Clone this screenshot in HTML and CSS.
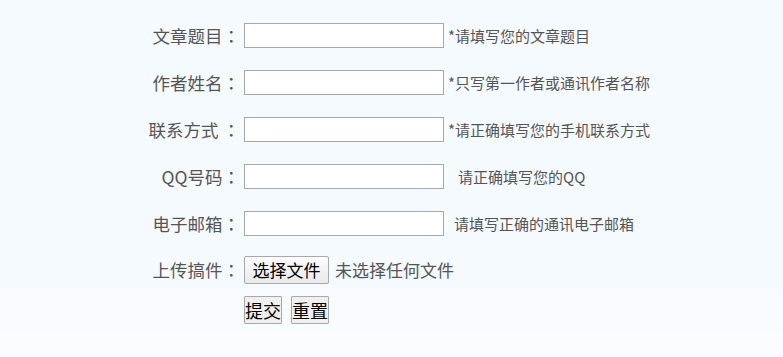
FILE: index.html
```html
<!DOCTYPE html>
<html lang="zh-CN">
<head>
<meta charset="utf-8">
<title>投稿</title>
<link rel="stylesheet" href="styles.css">
</head>
<body>
<form class="form">
  <div class="row">
    <label class="label">文章题目<span class="colon" lang="zh-TW">：</span></label>
    <input class="field" type="text">
    <span class="hint">*请填写您的文章题目</span>
  </div>
  <div class="row">
    <label class="label">作者姓名<span class="colon" lang="zh-TW">：</span></label>
    <input class="field" type="text">
    <span class="hint">*只写第一作者或通讯作者名称</span>
  </div>
  <div class="row">
    <label class="label">联系方式 <span class="colon" lang="zh-TW">：</span></label>
    <input class="field" type="text">
    <span class="hint">*请正确填写您的手机联系方式</span>
  </div>
  <div class="row">
    <label class="label">QQ号码<span class="colon" lang="zh-TW">：</span></label>
    <input class="field" type="text">
    <span class="hint hint-qq">请正确填写您的QQ</span>
  </div>
  <div class="row">
    <label class="label">电子邮箱<span class="colon" lang="zh-TW">：</span></label>
    <input class="field" type="text">
    <span class="hint hint-mail">请填写正确的通讯电子邮箱</span>
  </div>
  <div class="row row-file">
    <label class="label">上传搞件<span class="colon" lang="zh-TW">：</span></label>
    <span class="file-btn">选择文件</span>
    <span class="file-name">未选择任何文件</span>
  </div>
  <div class="row row-actions">
    <span class="label"></span>
    <button class="btn" type="button">提交</button>
    <button class="btn" type="button">重置</button>
  </div>
</form>
</body>
</html>
```

FILE: styles.css
```css
html, body {
  margin: 0;
  padding: 0;
}
body {
  min-height: 357px;
  font-family: "Noto Sans CJK SC", "Noto Sans", sans-serif;
  color: #555;
  background: linear-gradient(to bottom,
    #f5faff 0, #f5faff 289px,
    #f8fbff 289px, #f8fbff 332px,
    #fafcff 332px, #fafcff 100%);
}
.form {
  display: flex;
  flex-direction: column;
  padding-top: 12px;
}
.row {
  display: flex;
  align-items: center;
  height: 47px;
}
.label {
  width: 240px;
  flex: none;
  text-align: right;
  font-size: 17.5px;
  line-height: 24px;
  color: #555;
  margin-right: 4px;
  white-space: pre;
}
.colon {
  font-family: "Noto Sans CJK TC", "Noto Sans CJK SC", sans-serif;
}
.field {
  width: 200px;
  height: 25px;
  box-sizing: border-box;
  margin: 0;
  border: 1px solid #a9a9a9;
  background: #fff;
  padding: 0 2px;
}
.hint {
  font-size: 15px;
  line-height: 20px;
  color: #555;
  margin-left: 4px;
}
.hint-qq {
  margin-left: 14px;
}
.hint-mail {
  margin-left: 10px;
}
.row-file {
  height: 46px;
}
.file-btn {
  box-sizing: border-box;
  width: 85px;
  height: 28px;
  border: 1px solid #a9a9a9;
  border-radius: 2px;
  background: linear-gradient(to bottom, #fdfdfd, #e9e9e9);
  color: #000;
  font-size: 17px;
  line-height: 26px;
  text-align: center;
}
.file-name {
  margin-left: 6px;
  font-size: 17px;
  line-height: 24px;
  color: #555;
}
.row-actions {
  height: 34px;
}
.btn {
  box-sizing: border-box;
  height: 28px;
  margin: 0 9px 0 0;
  padding: 0;
  border: 1px solid #a9a9a9;
  border-radius: 1px;
  background: #f0f0f0;
  color: #000;
  font-family: "Noto Sans CJK SC", sans-serif;
  font-size: 18px;
  line-height: 26px;
}
```
